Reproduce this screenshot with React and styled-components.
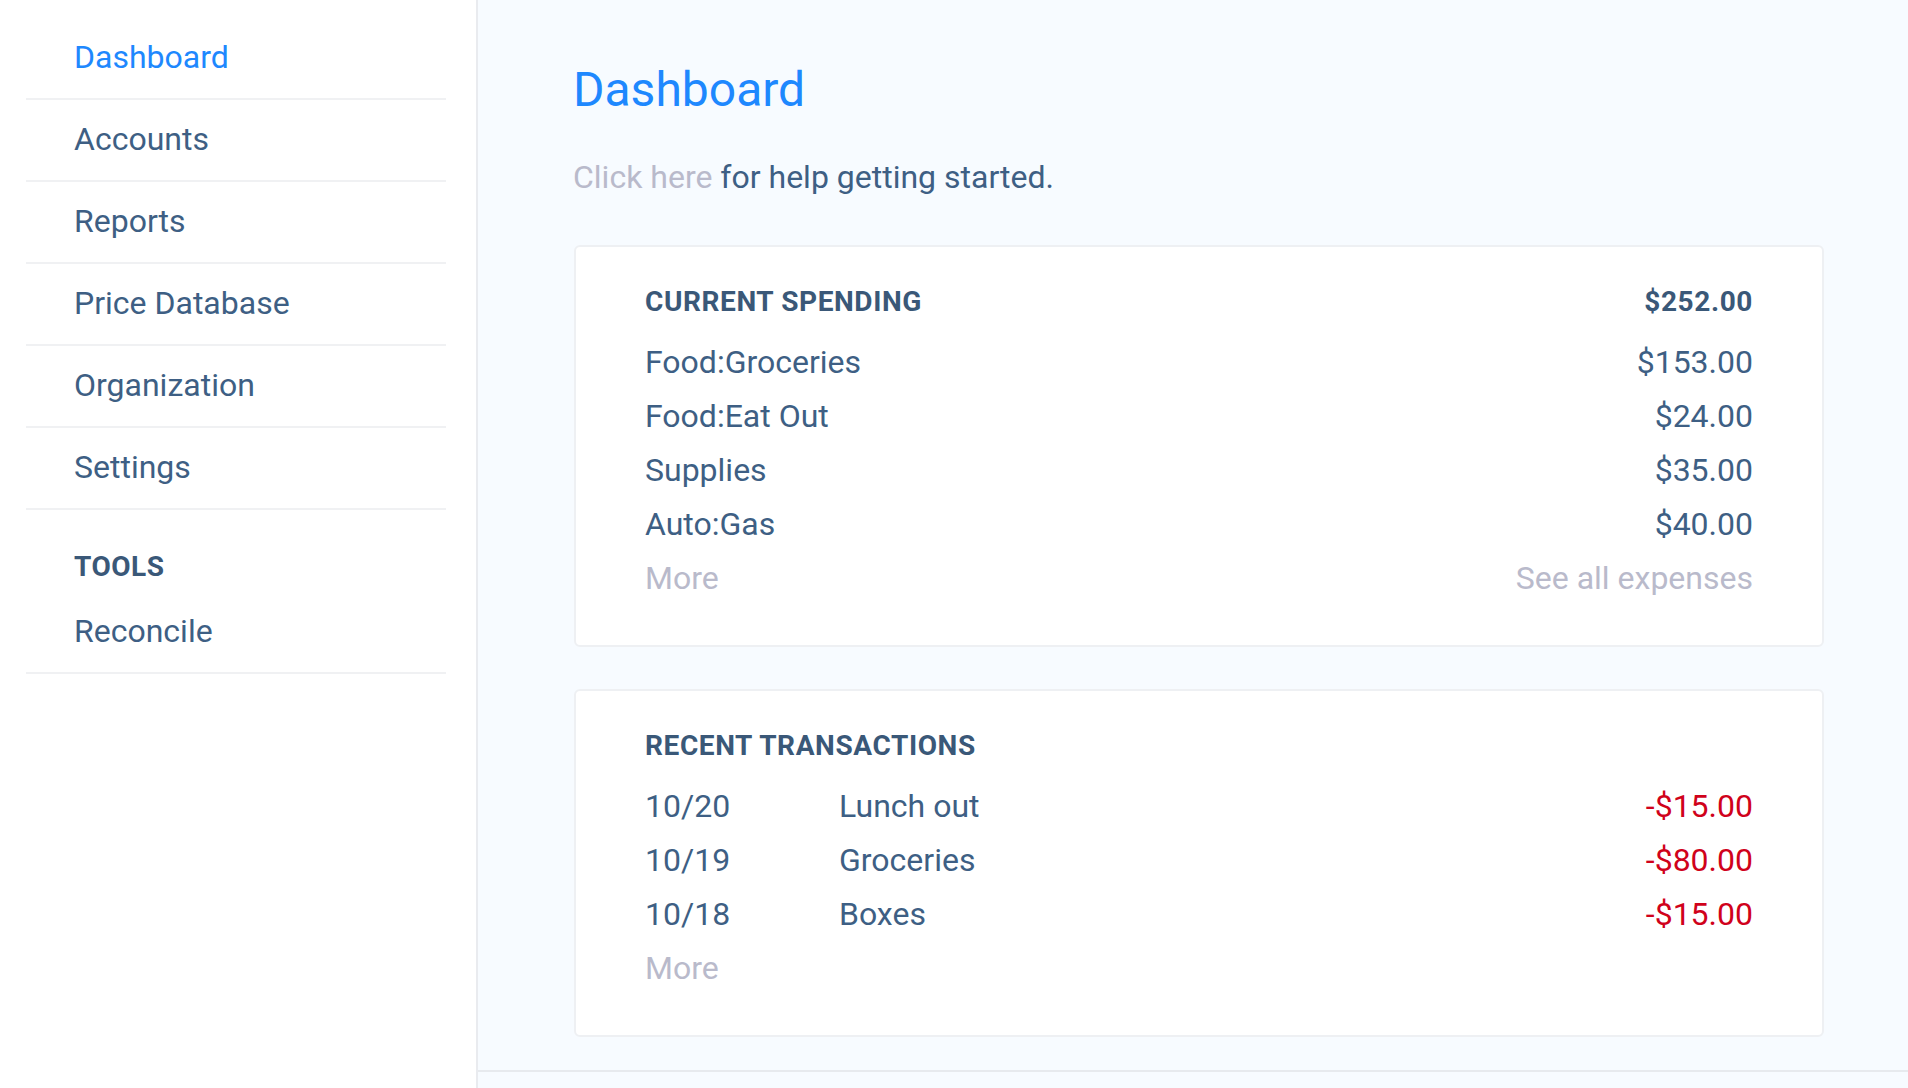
import React from "react";
import styled, { createGlobalStyle } from "styled-components";

const GlobalStyle = createGlobalStyle`
  html, body {
    margin: 0;
    padding: 0;
    background: #f7fbff;
  }
  body {
    font-family: Roboto, "Liberation Sans", Arial, sans-serif;
    color: #3e5f84;
  }
  * { box-sizing: border-box; }
`;

const Layout = styled.div`
  display: flex;
  min-height: 100vh;
  width: 100%;
`;

const Sidebar = styled.nav`
  width: 478px;
  flex: 0 0 478px;
  background: #ffffff;
  border-right: 2px solid #e9ebef;
  padding: 18px 30px 0 26px;
`;

const NavList = styled.ul`
  list-style: none;
  margin: 0;
  padding: 0;
`;

const NavItem = styled.li`
  padding: 15px 0 17px 48px;
  font-size: 32px;
  line-height: 48px;
  border-bottom: 2px solid #f0f1f3;
  color: ${(p) => (p.$active ? "#1e88fe" : "#3e5f84")};
  cursor: pointer;
`;

const NavHeading = styled.div`
  padding: 36px 0 4px 48px;
  font-size: 28px;
  line-height: 42px;
  font-weight: 700;
  letter-spacing: 0.5px;
  color: #3a5878;
  text-transform: uppercase;
`;

const Main = styled.main`
  flex: 1;
  display: flex;
  flex-direction: column;
`;

const Content = styled.div`
  padding: 0 84px 0 96px;
`;

const Title = styled.h1`
  margin: 61px 0 0 -1px;
  font-size: 48px;
  line-height: 58px;
  font-weight: 400;
  color: #1e88fe;
`;

const Intro = styled.p`
  margin: 34px 0 44px -1px;
  font-size: 32px;
  line-height: 48px;
  color: #3e5f84;
`;

const Muted = styled.a`
  color: #b9bacb;
  text-decoration: none;
  cursor: pointer;
`;

const Card = styled.section`
  background: #ffffff;
  border: 2px solid #eef0f3;
  border-radius: 6px;
  padding: 34px 69px 40px 69px;
  & + & {
    margin-top: 42px;
  }
`;

const CardHeader = styled.div`
  display: flex;
  justify-content: space-between;
  font-size: 28px;
  line-height: 42px;
  font-weight: 700;
  letter-spacing: 0.6px;
  color: #3a5878;
  text-transform: uppercase;
  margin-bottom: 12px;
`;

const Row = styled.div`
  display: flex;
  justify-content: space-between;
  font-size: 32px;
  line-height: 54px;
  color: ${(p) => (p.$muted ? "#b9bacb" : "#3e5f84")};
`;

const TxRow = styled.div`
  display: grid;
  grid-template-columns: 194px 1fr auto;
  font-size: 32px;
  line-height: 54px;
  color: #3e5f84;
`;

const Amount = styled.span`
  text-align: right;
  color: ${(p) => (p.$negative ? "#d0021b" : "inherit")};
`;

const Footer = styled.footer`
  margin-top: 33px;
  flex: 1;
  border-top: 2px solid #e7eaee;
`;

const navItems = ["Dashboard", "Accounts", "Reports", "Price Database", "Organization", "Settings"];

const spending = [
  ["Food:Groceries", "$153.00"],
  ["Food:Eat Out", "$24.00"],
  ["Supplies", "$35.00"],
  ["Auto:Gas", "$40.00"],
];

const transactions = [
  ["10/20", "Lunch out", "-$15.00"],
  ["10/19", "Groceries", "-$80.00"],
  ["10/18", "Boxes", "-$15.00"],
];

export default function App() {
  return (
    <>
      <GlobalStyle />
      <Layout>
        <Sidebar>
          <NavList>
            {navItems.map((item) => (
              <NavItem key={item} $active={item === "Dashboard"}>
                {item}
              </NavItem>
            ))}
          </NavList>
          <NavHeading>Tools</NavHeading>
          <NavList>
            <NavItem>Reconcile</NavItem>
          </NavList>
        </Sidebar>
        <Main>
          <Content>
            <Title>Dashboard</Title>
            <Intro>
              <Muted>Click here</Muted> for help getting started.
            </Intro>
            <Card>
              <CardHeader>
                <span>Current Spending</span>
                <span>$252.00</span>
              </CardHeader>
              {spending.map(([name, value]) => (
                <Row key={name}>
                  <span>{name}</span>
                  <span>{value}</span>
                </Row>
              ))}
              <Row $muted>
                <span>More</span>
                <span>See all expenses</span>
              </Row>
            </Card>
            <Card>
              <CardHeader>
                <span>Recent Transactions</span>
              </CardHeader>
              {transactions.map(([date, desc, amt]) => (
                <TxRow key={date}>
                  <span>{date}</span>
                  <span>{desc}</span>
                  <Amount $negative>{amt}</Amount>
                </TxRow>
              ))}
              <Row $muted>
                <span>More</span>
              </Row>
            </Card>
          </Content>
          <Footer />
        </Main>
      </Layout>
    </>
  );
}
